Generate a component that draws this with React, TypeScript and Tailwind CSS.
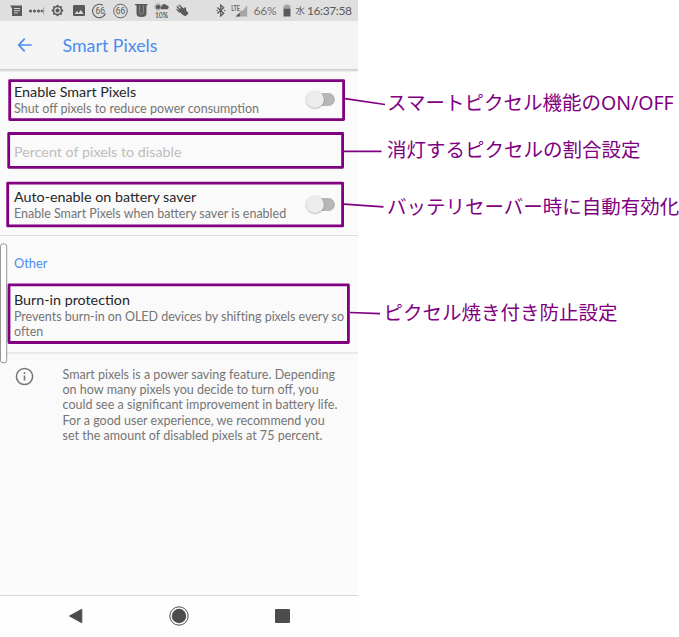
import type { ReactNode } from "react";

function Switch() {
  return (
    <div className="flex h-[18px] w-7 shrink-0 items-center">
      <div className="flex h-[12.5px] w-7 items-center rounded-full bg-gradient-to-r from-transparent from-30% to-[#b6b6b6] to-30%">
        <div className="-ml-px size-[17.5px] shrink-0 rounded-full bg-[#ececec] shadow-[0_0.5px_1.5px_rgba(0,0,0,0.4)]" />
      </div>
    </div>
  );
}

function Title({ children }: { children: ReactNode }) {
  return <div className="text-[14.3px] leading-[18px] text-[#262626]">{children}</div>;
}

function Summary({ children }: { children: ReactNode }) {
  return <div className="-mt-[0.2px] text-[12.5px] leading-[15.2px] whitespace-nowrap text-[#757575]">{children}</div>;
}

function StatusBar() {
  return (
    <div className="flex h-[21px] shrink-0 items-center bg-[#dfdfdf] text-[#5a5a5a]">
      {/* message */}
      <svg className="ml-[10px] h-[12px] w-[13px] shrink-0" viewBox="0 0 13 12">
        <path d="M0 0.5H12V11H2V3.500Z" fill="currentColor" />
        <path d="M4 3.5h6M4 5.700h6M4 7.900h4" stroke="#dfdfdf" strokeWidth="0.9" />
      </svg>
      {/* dots */}
      <svg className="ml-[6px] h-[10px] w-[16px] shrink-0" viewBox="0 0 16 10">
        <g fill="currentColor">
          <circle cx="1.5" cy="5" r="1.5" />
          <circle cx="5.5" cy="5" r="1.5" />
          <circle cx="9.5" cy="5" r="1.5" />
          <circle cx="12.8" cy="5" r="1.2" />
        </g>
        <path d="M14.7 1.5v7" stroke="#8a8a8a" strokeWidth="0.8" />
      </svg>
      {/* brightness gear */}
      <svg className="ml-[6px] h-[13px] w-[13px] shrink-0" viewBox="0 0 24 24">
        <path fill="currentColor" fillRule="evenodd" d="M20 8.7V4h-4.7L12 .7 8.7 4H4v4.700L.7 12 4 15.300V20h4.700L12 23.300 15.300 20H20v-4.700L23.300 12 20 8.700ZM12 6a6 6 0 1 0 0 12 6 6 0 0 0 0-12Z" />
        <circle cx="12" cy="12" r="3.700" fill="currentColor" />
      </svg>
      {/* image */}
      <svg className="ml-[8.5px] h-[11px] w-[12px] shrink-0" viewBox="0 0 12 11">
        <rect width="12" height="11" rx="1.200" fill="currentColor" />
        <path d="M1.700 9 4 6l1.600 1.900L7.800 5l2.700 4Z" fill="#dfdfdf" />
      </svg>
      {/* battery percent, partial ring */}
      <svg className="ml-[7px] h-[16px] w-[15px] shrink-0" viewBox="0 0 15 16">
        <path d="M11 2.400A6.700 6.700 0 1 0 13.500 10.500" fill="none" stroke="currentColor" strokeWidth="1.100" />
        <text x="3.500" y="11.300" fontSize="9.500" textLength="9.500" lengthAdjust="spacingAndGlyphs" fill="currentColor" className="font-['Roboto',sans-serif]">66</text>
      </svg>
      {/* battery percent, full ring */}
      <svg className="ml-[6.5px] h-[16px] w-[15px] shrink-0" viewBox="0 0 15 16">
        <circle cx="7.500" cy="8" r="6.800" fill="none" stroke="currentColor" strokeWidth="0.900" />
        <text x="2.700" y="11.300" fontSize="9.500" textLength="9.500" lengthAdjust="spacingAndGlyphs" fill="currentColor" className="font-['Roboto',sans-serif]">66</text>
      </svg>
      {/* U badge */}
      <svg className="ml-[7px] h-[13px] w-[13px] shrink-0" viewBox="0 0 13 13">
        <path d="M0 0H12.500V1.300H11.500V9.500Q11.500 13 6.500 13T1.500 9.500V1.300H0Z" fill="currentColor" />
        <path d="M4.600 1.300V8.500Q4.600 10 6.500 10T8.400 8.500V1.300" fill="none" stroke="#9a9a9a" strokeWidth="0.800" />
      </svg>
      {/* weather */}
      <svg className="ml-[6px] h-[17px] w-[17px] shrink-0 overflow-visible" viewBox="0 0 17 17">
        <circle cx="4" cy="5" r="2.200" fill="currentColor" />
        <circle cx="4" cy="5" r="3.100" fill="none" stroke="currentColor" strokeWidth="0.900" strokeDasharray="1.100 0.850" />
        <path d="M7.500 7.200C6 7.200 6 4.500 7.600 4.500 7.800 1.600 11.500 1.100 12 3.300 15 2.600 15.700 7.200 13 7.200Z" fill="currentColor" />
        <text x="1" y="16" fontSize="7.500" textLength="13" lengthAdjust="spacingAndGlyphs" fill="currentColor" stroke="currentColor" strokeWidth="0.150" className="font-['Lato',sans-serif]">10%</text>
      </svg>
      {/* hand */}
      <svg className="ml-[5px] h-[13px] w-[13px] shrink-0" viewBox="0 0 13 13">
        <path d="M3.200 1.200 7 5M1.200 2.800 5 7M1 5.500 3.500 8" stroke="currentColor" strokeWidth="1.300" strokeLinecap="round" />
        <path d="M2.500 6.500 5.500 3.200 8 4.700 8.800 3 10 3.700 10.200 6.500 12.600 9.200 9.500 12.300 6.500 10.800Z" fill="currentColor" />
      </svg>
      {/* bluetooth */}
      <svg className="ml-[27px] h-[13px] w-[10px] shrink-0" viewBox="0 0 10 13">
        <path d="M1.300 3.500 7.700 9.300 4.700 12V1L7.700 3.700 1.300 9.500" fill="none" stroke="currentColor" strokeWidth="1.250" />
        <circle cx="1" cy="6.500" r="0.700" fill="currentColor" />
        <circle cx="8.700" cy="6.500" r="0.700" fill="currentColor" />
      </svg>
      {/* LTE signal */}
      <svg className="ml-[4.5px] h-[14px] w-[17px] shrink-0" viewBox="0 0 17 14">
        <path d="M16.200 1.500V12.500H4.500L9 8.500V6.800H11.500Z" fill="#a5a5a5" />
        <path d="M8.800 8.500V12.500H4.500Z" fill="currentColor" />
        <text x="0.200" y="6.500" fontSize="7.500" textLength="8.500" lengthAdjust="spacingAndGlyphs" fill="currentColor" className="font-['Lato',sans-serif] font-bold">LTE</text>
      </svg>
      <span className="ml-[6px] w-[24px] text-[12px] leading-[21px] tracking-[-0.2px] text-[#707070]">66%</span>
      <svg className="ml-[5.5px] h-[13px] w-[8px] shrink-0" viewBox="0 0 8 13">
        <path d="M2 .5H6V1.500H7.500V5H.5V1.500H2Z" fill="#a5a5a5" />
        <path d="M.5 4.700H7.500V12.500H.5Z" fill="currentColor" />
      </svg>
      <span className="ml-[4.5px] w-[10px] font-['Noto_Sans_CJK_JP',sans-serif] text-[9.5px] leading-[21px] text-[#606060]">水</span>
      <span className="ml-[1.5px] text-[12px] leading-[21px] tracking-[-0.4px] whitespace-nowrap text-[#5a5a5a]">16:37:58</span>
    </div>
  );
}

function Label({ children }: { children: ReactNode }) {
  return <div className="h-7 text-[19.5px] leading-7 whitespace-nowrap text-[#800080]">{children}</div>;
}

export default function App() {
  return (
    <div className="relative flex h-[637px] w-[679px] overflow-hidden bg-white">
      <div className="flex w-[358px] shrink-0 flex-col bg-[#fafafa] font-['Lato',sans-serif]">
        <StatusBar />
        <header className="flex h-12 shrink-0 items-center bg-[#f4f4f4] text-[#4c8bf0]">
          <svg className="ml-[17px] h-4 w-4" viewBox="0 0 16 16">
            <path d="M7.700 1.700 1.700 8l6 6.300M1.700 8H14.700" fill="none" stroke="currentColor" strokeWidth="1.700" />
          </svg>
          <h1 className="ml-[29.5px] text-[17.8px] leading-6">Smart Pixels</h1>
        </header>
        <div className="h-[3px] shrink-0 bg-gradient-to-b from-[#c8c8c8] to-[#f4f4f4]" />

        <section className="flex h-[164px] shrink-0 flex-col border-b border-[#dcdcdc] pl-[14px]">
          <div className="flex items-center pt-[11px] pr-[23px]">
            <div className="grow">
              <Title>Enable Smart Pixels</Title>
              <Summary>Shut off pixels to reduce power consumption</Summary>
            </div>
            <Switch />
          </div>
          <div className="mt-[26.5px] text-[14.3px] leading-[18px] text-[#bdbdbd]">Percent of pixels to disable</div>
          <div className="flex items-center pt-[27.5px] pr-[23px]">
            <div className="grow">
              <Title>Auto-enable on battery saver</Title>
              <Summary>Enable Smart Pixels when battery saver is enabled</Summary>
            </div>
            <Switch />
          </div>
        </section>

        <section className="h-[118px] shrink-0 border-b-2 border-[#e9e9e9] pl-[14px]">
          <div className="pt-[19px] text-[12.8px] leading-[16px] text-[#4c8bf0]">Other</div>
          <div className="pt-[20px]">
            <Title>Burn-in protection</Title>
            <div className="tracking-[-0.03px]">
              <Summary>
                Prevents burn-in on OLED devices by shifting pixels every so
                <br />
                often
              </Summary>
            </div>
          </div>
        </section>

        <section className="flex pt-[13px] pl-[15px] text-[#757575]">
          <svg className="h-[19px] w-[19px] shrink-0" viewBox="0 0 19 19">
            <circle cx="9.500" cy="9.500" r="8.100" fill="none" stroke="currentColor" strokeWidth="1.500" />
            <path d="M9.500 8.500V13.600M9.500 5.200V6.900" stroke="currentColor" strokeWidth="1.600" />
          </svg>
          <p className="ml-[28.5px] text-[12.55px] leading-[15.2px] whitespace-nowrap">
            Smart pixels is a power saving feature. Depending
            <br />
            on how many pixels you decide to turn off, you
            <br />
            could see a significant improvement in battery life.
            <br />
            For a good user experience, we recommend you
            <br />
            set the amount of disabled pixels at 75 percent.
          </p>
        </section>

        <nav className="mt-auto flex h-[42px] shrink-0 items-center border-t border-[#d8d8d8] bg-[#fefefe] pb-px text-[#4d4d4d]">
          <svg className="ml-[68px] h-4 w-[15px]" viewBox="0 0 15 16">
            <path d="M1.500 8 13.800 1.200V14.800Z" fill="currentColor" stroke="currentColor" strokeWidth="1" strokeLinejoin="round" />
          </svg>
          <svg className="ml-[86px] h-5 w-5" viewBox="0 0 20 20">
            <circle cx="10" cy="10" r="9.200" fill="none" stroke="currentColor" strokeWidth="1" />
            <circle cx="10" cy="10" r="7.200" fill="currentColor" />
          </svg>
          <div className="ml-[86px] h-[14px] w-[14.5px] rounded-[1px] bg-[#4d4d4d]" />
        </nav>
      </div>

      <div className="flex flex-col pt-[89px] pl-[29px] font-['Noto_Sans','Noto_Sans_CJK_JP',sans-serif]">
        <Label>スマートピクセル機能のON/OFF</Label>
        <div className="mt-[19px]">
          <Label>消灯するピクセルの割合設定</Label>
        </div>
        <div className="mt-[29px]">
          <Label>バッテリセーバー時に自動有効化</Label>
        </div>
        <div className="mt-[78px] -ml-[3.5px]">
          <Label>ピクセル焼き付き防止設定</Label>
        </div>
      </div>

      {/* callout frames and their leader lines */}
      <svg className="pointer-events-none absolute inset-0 h-[637px] w-[679px]" viewBox="0 0 679 637" fill="none">
        <rect x="0.500" y="243.800" width="6.200" height="119" rx="2.500" fill="#fdfdfd" stroke="#8a8a8a" strokeWidth="0.900" />
        <g stroke="#800080" strokeWidth="2.800" strokeLinejoin="round">
          <rect x="9.700" y="80.600" width="333.900" height="39" />
          <rect x="8.700" y="133.500" width="333.900" height="33.800" />
          <rect x="7.700" y="183.200" width="334.900" height="42.700" />
          <rect x="9" y="284.900" width="339.400" height="57.600" />
        </g>
        <path d="M345 98.600 385 104.500M344 151.300H381.500M344 204.200 383.500 206.900M350 312.500 380 313.700" stroke="#800080" strokeWidth="1.700" />
      </svg>
    </div>
  );
}
